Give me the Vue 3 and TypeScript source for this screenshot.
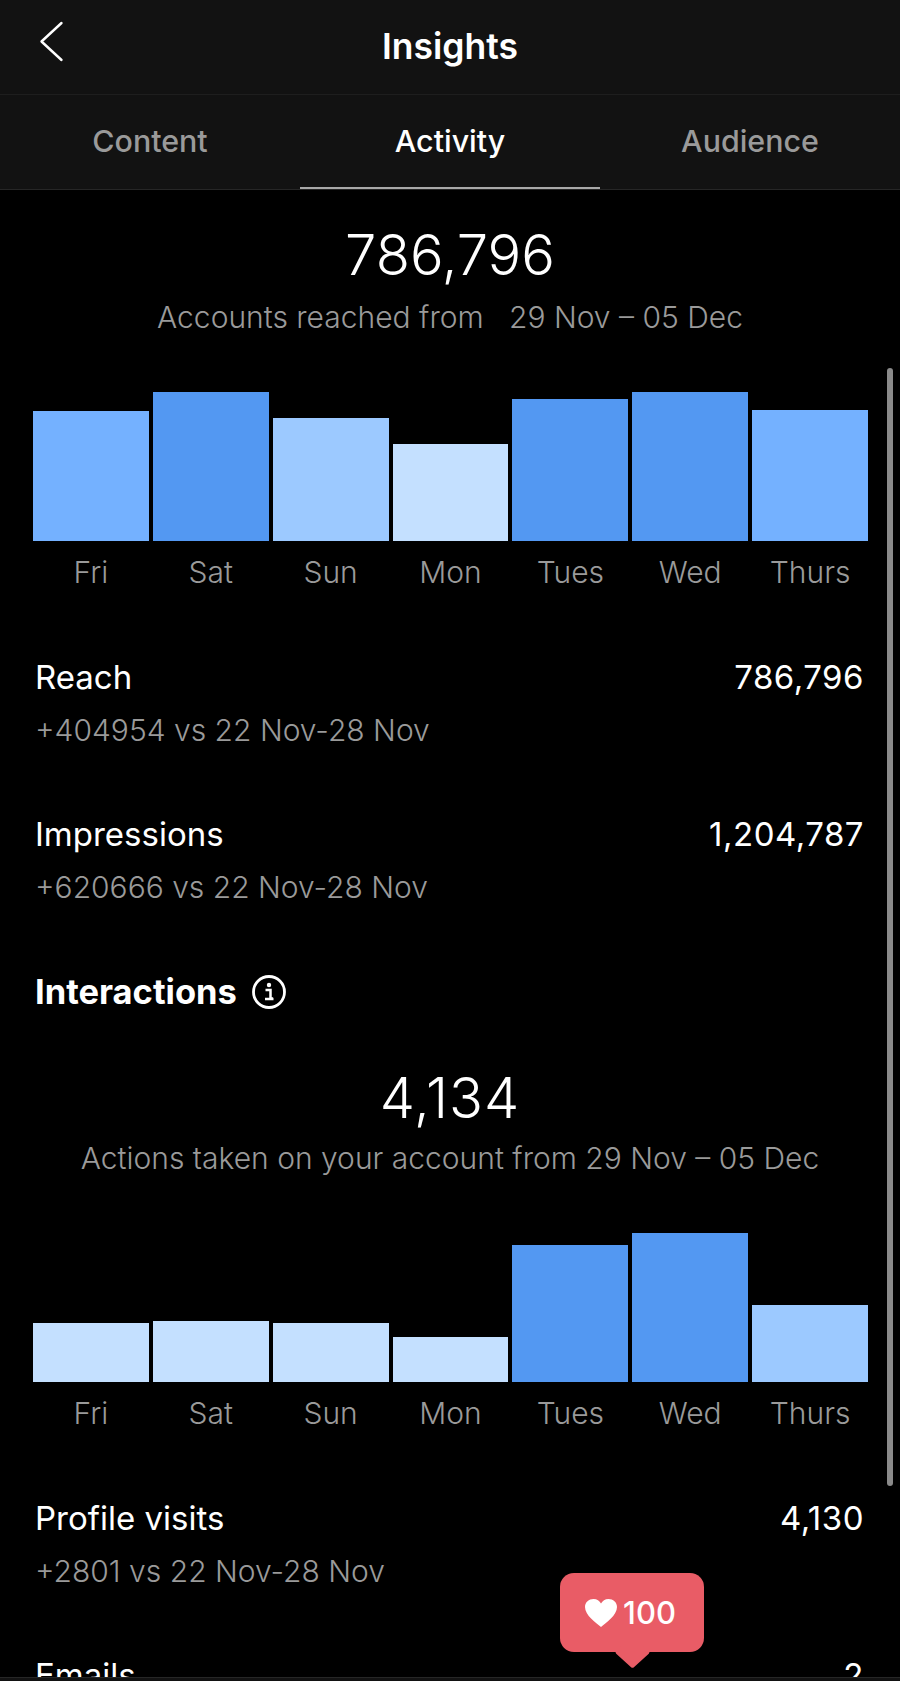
<template>
  <div class="page">
    <header class="topbar">
      <svg class="back" width="28" height="42" viewBox="0 0 28 42">
        <path d="M24.500 3 L4.500 21.500 L24.500 40" fill="none" stroke="#fff" stroke-width="2.400" stroke-linecap="round" stroke-linejoin="round" />
      </svg>
      <div class="title">Insights</div>
    </header>
    <nav class="tabs">
      <div v-for="tab in tabs" :key="tab" class="tab" :class="{ active: tab === 'Activity' }">{{ tab }}</div>
    </nav>
    <main class="content">
      <section class="summary first">
        <div class="big">786,796</div>
        <div class="caption">Accounts reached from &nbsp; 29 Nov – 05 Dec</div>
      </section>
      <div class="chart chart-a">
        <div v-for="bar in reachBars" :key="bar.day" class="col">
          <div class="plot"><div class="bar" :style="{ height: bar.h + 'px', background: bar.c }"></div></div>
          <div class="day">{{ bar.day }}</div>
        </div>
      </div>
      <div class="stat stat-reach">
        <div class="line"><span>Reach</span><span class="num">786,796</span></div>
        <div class="sub">+404954 vs 22 Nov-28 Nov</div>
      </div>
      <div class="stat stat-imp">
        <div class="line"><span>Impressions</span><span class="num">1,204,787</span></div>
        <div class="sub">+620666 vs 22 Nov-28 Nov</div>
      </div>
      <div class="heading">
        <span>Interactions</span>
        <svg width="36" height="36" viewBox="0 0 36 36">
          <circle cx="18" cy="18" r="15.500" fill="none" stroke="#fff" stroke-width="2.800" />
          <circle cx="18" cy="11" r="2.200" fill="#fff" />
          <path d="M14.500 16 H19.500 V24.500 H22 M14 25 H22.500" fill="none" stroke="#fff" stroke-width="2.500" />
        </svg>
      </div>
      <section class="summary second">
        <div class="big">4,134</div>
        <div class="caption">Actions taken on your account from 29 Nov – 05 Dec</div>
      </section>
      <div class="chart chart-b">
        <div v-for="bar in actionBars" :key="bar.day" class="col">
          <div class="plot"><div class="bar" :style="{ height: bar.h + 'px', background: bar.c }"></div></div>
          <div class="day">{{ bar.day }}</div>
        </div>
      </div>
      <div class="stat stat-visits">
        <div class="line"><span>Profile visits</span><span class="num">4,130</span></div>
        <div class="sub">+2801 vs 22 Nov-28 Nov</div>
      </div>
      <div class="stat stat-emails">
        <div class="line"><span>Emails</span><span class="num">2</span></div>
      </div>
    </main>
    <div class="scrollbar"></div>
    <div class="badge">
      <svg width="34" height="30" viewBox="0 0 34 30">
        <path d="M17 29 C12 24.500 1 17.500 1 9 C1 4 5 1 9.500 1 C13 1 15.500 2.800 17 5.500 C18.500 2.800 21 1 24.500 1 C29 1 33 4 33 9 C33 17.500 22 24.500 17 29 Z" fill="#fff" />
      </svg>
      <span>100</span>
    </div>
    <div class="bottom"></div>
  </div>
</template>

<script setup lang="ts">
const tabs = ['Content', 'Activity', 'Audience']

const dark = '#5398f2'
const mid = '#74b1ff'
const soft = '#9cc9ff'
const pale = '#c4e0ff'

const reachBars = [
  { day: 'Fri', h: 130, c: mid },
  { day: 'Sat', h: 149, c: dark },
  { day: 'Sun', h: 123, c: soft },
  { day: 'Mon', h: 97, c: pale },
  { day: 'Tues', h: 142, c: dark },
  { day: 'Wed', h: 149, c: dark },
  { day: 'Thurs', h: 131, c: mid },
]

const actionBars = [
  { day: 'Fri', h: 59, c: pale },
  { day: 'Sat', h: 61, c: pale },
  { day: 'Sun', h: 59, c: pale },
  { day: 'Mon', h: 45, c: pale },
  { day: 'Tues', h: 137, c: dark },
  { day: 'Wed', h: 149, c: dark },
  { day: 'Thurs', h: 77, c: soft },
]
</script>

<style>
html,
body {
  margin: 0;
  background: #000;
}
</style>

<style scoped>
.page {
  position: relative;
  width: 900px;
  height: 1681px;
  display: flex;
  flex-direction: column;
  overflow: hidden;
  background: #000;
  color: #fff;
  font-family: Inter, "Liberation Sans", sans-serif;
}
.topbar {
  position: relative;
  flex: none;
  height: 92px;
  padding-bottom: 2px;
  display: flex;
  align-items: center;
  justify-content: center;
  background: #121212;
  border-bottom: 1px solid #1e1e1e;
}
.back {
  position: absolute;
  left: 37px;
  top: 20px;
}
.title {
  font-size: 35.500px;
  font-weight: 600;
}
.tabs {
  flex: none;
  height: 94px;
  display: flex;
  background: #121212;
  border-bottom: 1px solid #262626;
}
.tab {
  flex: 1;
  display: flex;
  align-items: center;
  justify-content: center;
  padding-bottom: 2px;
  font-size: 30.400px;
  font-weight: 500;
  color: #9a9a9a;
}
.tab.active {
  color: #fff;
  box-shadow: inset 0 -2px 0 #a8a8a8;
}
.content {
  flex: 1;
  min-height: 0;
  overflow: hidden;
}
.summary {
  display: flex;
  flex-direction: column;
  align-items: center;
}
.first {
  margin-top: 31px;
}
.first .caption {
  margin-top: 10px;
}
.second {
  margin-top: 52px;
}
.second .big {
  letter-spacing: 1px;
}
.second .caption {
  margin-top: 8px;
}
.big {
  font-size: 56px;
  line-height: 68px;
  font-weight: 300;
}
.caption {
  font-size: 30px;
  line-height: 36px;
  font-weight: 300;
  color: #9a9a9a;
}
.chart {
  display: flex;
  gap: 4px;
  padding: 0 32px 0 33px;
}
.chart-a {
  margin-top: 57px;
}
.chart-b {
  margin-top: 57px;
}
.col {
  flex: 1;
  min-width: 0;
}
.plot {
  height: 149px;
  display: flex;
  align-items: flex-end;
}
.bar {
  width: 100%;
}
.day {
  margin-top: 13px;
  text-align: center;
  font-size: 30px;
  line-height: 36px;
  font-weight: 300;
  color: #9a9a9a;
}
.stat {
  padding: 0 36px 0 35px;
}
.stat-reach {
  margin-top: 67px;
}
.stat-imp {
  margin-top: 66px;
}
.stat-visits {
  margin-top: 67px;
}
.stat-emails {
  margin-top: 66px;
}
.line {
  display: flex;
  justify-content: space-between;
  font-size: 33px;
  line-height: 40px;
  font-weight: 400;
}
.num {
  letter-spacing: 0.500px;
}
.sub {
  margin-top: 15px;
  font-size: 30px;
  line-height: 36px;
  font-weight: 300;
  color: #9a9a9a;
}
.heading {
  margin-top: 67px;
  padding: 0 35px;
  display: flex;
  align-items: center;
  gap: 14px;
  font-size: 34.500px;
  line-height: 40px;
  font-weight: 700;
}
.scrollbar {
  position: absolute;
  left: 887px;
  top: 368px;
  width: 6px;
  height: 1118px;
  border-radius: 3px;
  background: #8a8a8a;
}
.badge {
  position: absolute;
  left: 560px;
  top: 1573px;
  width: 144px;
  height: 79px;
  display: flex;
  align-items: center;
  justify-content: center;
  gap: 5px;
  border-radius: 14px;
  background: #e95c66;
  font-size: 31px;
  font-weight: 500;
}
.badge svg,
.badge span {
  position: relative;
  z-index: 1;
}
.badge svg {
  margin-left: -4px;
}
.badge::after {
  content: "";
  position: absolute;
  left: 60px;
  bottom: -13px;
  width: 25px;
  height: 25px;
  background: #e95c66;
  transform: scaleY(0.9) rotate(45deg);
  border-radius: 2px;
}
.bottom {
  flex: none;
  height: 4px;
  background: #121212;
  border-top: 1px solid #262626;
  box-sizing: border-box;
}
</style>
